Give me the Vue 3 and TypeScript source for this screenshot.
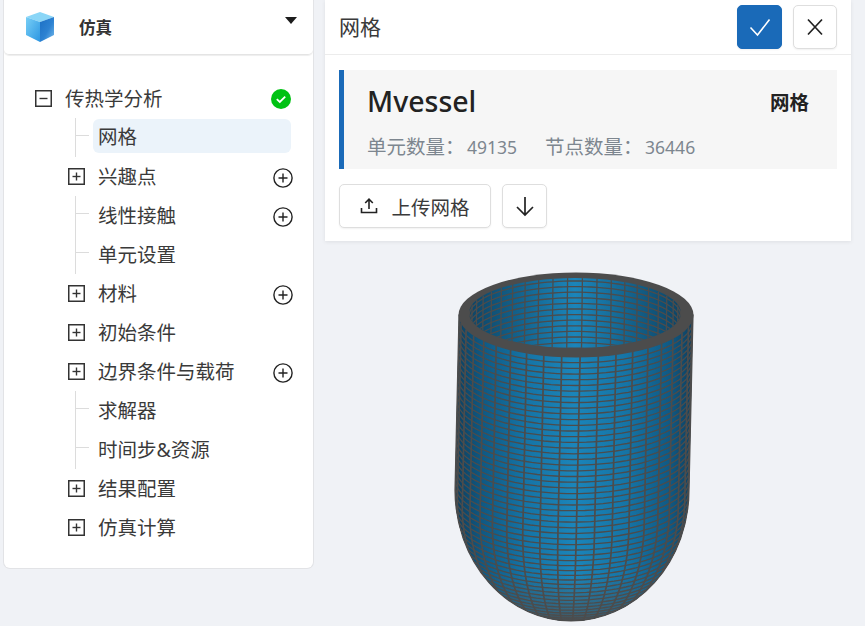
<script setup lang="ts">
interface TreeRow {
  label: string;
  kind: "root" | "branch" | "leaf";
  active?: boolean;
  add?: boolean;
  done?: boolean;
}

const rows: TreeRow[] = [
  { label: "传热学分析", kind: "root", done: true },
  { label: "网格", kind: "leaf", active: true },
  { label: "兴趣点", kind: "branch", add: true },
  { label: "线性接触", kind: "leaf", add: true },
  { label: "单元设置", kind: "leaf" },
  { label: "材料", kind: "branch", add: true },
  { label: "初始条件", kind: "branch" },
  { label: "边界条件与载荷", kind: "branch", add: true },
  { label: "求解器", kind: "leaf" },
  { label: "时间步&资源", kind: "leaf" },
  { label: "结果配置", kind: "branch" },
  { label: "仿真计算", kind: "branch" },
];

// vessel mesh, projected with a slight downward view
const R = 117;
const CX = 576;
const CY = 315;
const K = 0.36;
const S = 0.933;
const LEAN = 0.02;
const LEN = 188;
const BOTTOM = 1.2; // the dome is a little deeper than a true hemisphere
const rad = (d: number) => (d * Math.PI) / 180;

function project(x: number, toViewer: number, z: number) {
  return `${(CX + x - LEAN * z).toFixed(1)},${(CY + S * z + K * toViewer).toFixed(1)}`;
}

function wallPoint(deg: number, z: number) {
  if (z <= LEN) return project(R * Math.sin(rad(deg)), R * Math.cos(rad(deg)), z);
  const phi = (z - LEN) / (R * BOTTOM);
  const r = R * Math.cos(phi);
  return project(r * Math.sin(rad(deg)), r * Math.cos(rad(deg)), LEN + R * BOTTOM * Math.sin(phi));
}

const ringLines: string[] = [];
for (let z = 6; z < LEN + R * BOTTOM * 1.5; z += 6.1) {
  const pts: string[] = [];
  for (let d = -90; d <= 90; d += 3) pts.push(wallPoint(d, z));
  ringLines.push(pts.join(" "));
}

const ribLines: string[] = [];
for (let d = -88; d <= 90; d += 9) {
  const pts: string[] = [];
  for (let z = 0; z < LEN + R * BOTTOM * 1.5; z += 5) pts.push(wallPoint(d, z));
  ribLines.push(pts.join(" "));
}

const innerLines: string[] = [];
const IX = 575;
const IY = 313;
const IR = 106;
const IK = 35;
for (let i = 0; i < 14; i++) {
  const pts: string[] = [];
  for (let d = -90; d <= 90; d += 3) {
    pts.push(`${(IX + IR * Math.sin(rad(d))).toFixed(1)},${(IY + 5.6 * i + 3 - IK * Math.cos(rad(d))).toFixed(1)}`);
  }
  innerLines.push(pts.join(" "));
}
for (let d = -84; d <= 90; d += 8) {
  const x = IX + IR * Math.sin(rad(d));
  const y = IY - IK * Math.cos(rad(d));
  innerLines.push(`${x.toFixed(1)},${y.toFixed(1)} ${(x - 1).toFixed(1)},${(y + 80).toFixed(1)}`);
}

const bodyPath = "M459,315 L455,490 A116,131 0 0 0 571,621 A118,131 0 0 0 689,490 L693,315 Z";
</script>

<template>
  <div class="page">
    <aside class="side">
      <header class="side-head">
        <svg class="logo" viewBox="0 0 28 30" width="28" height="30">
          <defs>
            <linearGradient id="cubeLeft" x1="0" y1="0" x2="1" y2="1">
              <stop offset="0" stop-color="#78cff6" />
              <stop offset="1" stop-color="#2c96e2" />
            </linearGradient>
            <linearGradient id="cubeRight" x1="0" y1="0" x2="1" y2="1">
              <stop offset="0" stop-color="#1b6fc4" />
              <stop offset="0.55" stop-color="#2d82d2" />
              <stop offset="1" stop-color="#79bdec" />
            </linearGradient>
          </defs>
          <path d="M14 0 L28 5 L14 10 L0 5 Z" fill="#8ad6f7" />
          <path d="M0 5 L14 10 L14 30 L0 23 Z" fill="url(#cubeLeft)" />
          <path d="M28 5 L14 10 L14 30 L28 23 Z" fill="url(#cubeRight)" />
        </svg>
        <span class="side-title">仿真</span>
        <span class="caret"></span>
      </header>

      <div class="tree">
        <div
          v-for="row in rows"
          :key="row.label"
          class="tree-row"
          :class="['tree-row--' + row.kind, { 'tree-row--active': row.active }]"
        >
          <span v-if="row.kind === 'leaf'" class="guide"></span>
          <svg v-else class="toggle" viewBox="0 0 17 17" width="17" height="17">
            <rect x="0.75" y="0.75" width="15.5" height="15.5" fill="#fff" stroke="#333" stroke-width="1.5" />
            <path d="M4.5 8.5 H12.5" stroke="#333" stroke-width="1.4" />
            <path v-if="row.kind === 'branch'" d="M8.5 4.5 V12.5" stroke="#333" stroke-width="1.4" />
          </svg>
          <span class="tree-label">{{ row.label }}</span>
          <svg v-if="row.done" class="row-icon row-icon--done" viewBox="0 0 20 20" width="20" height="20">
            <circle cx="10" cy="10" r="10" fill="#00c213" />
            <path d="M5.8 10.2 L8.8 13 L14.2 7.6" fill="none" stroke="#fff" stroke-width="1.8" />
          </svg>
          <svg v-if="row.add" class="row-icon" viewBox="0 0 20 20" width="20" height="20">
            <circle cx="10" cy="10" r="9.1" fill="none" stroke="#222" stroke-width="1.4" />
            <path d="M5.5 10 H14.5 M10 5.5 V14.5" stroke="#222" stroke-width="1.4" />
          </svg>
        </div>
      </div>
    </aside>

    <main class="main">
      <section class="panel">
        <header class="panel-head">
          <span class="panel-title">网格</span>
          <button type="button" class="btn btn--icon btn--primary">
            <svg viewBox="0 0 24 24" width="24" height="24">
              <path d="M2.5 12.5 L9.5 20 L21.5 4.5" fill="none" stroke="#fff" stroke-width="1.6" />
            </svg>
          </button>
          <button type="button" class="btn btn--icon btn--close">
            <svg viewBox="0 0 20 20" width="20" height="20">
              <path d="M3 2.5 L17 17.5 M17 2.5 L3 17.5" fill="none" stroke="#222" stroke-width="1.7" />
            </svg>
          </button>
        </header>

        <div class="panel-body">
          <div class="mesh-card">
            <div class="mesh-top">
              <span class="mesh-name">Mvessel</span>
              <span class="mesh-tag">网格</span>
            </div>
            <div class="mesh-stats">
              <span>单元数量：<span class="num">49135</span></span>
              <span>节点数量：<span class="num">36446</span></span>
            </div>
          </div>

          <div class="actions">
            <button type="button" class="btn btn--upload">
              <svg viewBox="0 0 18 18" width="18" height="18">
                <path d="M9 12 V2.5 M5.2 6 L9 2.2 L12.8 6 M1.5 11 V15.5 H16.5 V11" fill="none" stroke="#222" stroke-width="1.6" />
              </svg>
              <span>上传网格</span>
            </button>
            <button type="button" class="btn btn--icon">
              <svg viewBox="0 0 22 22" width="22" height="22">
                <path d="M11 2 V20 M3 12 L11 20 L19 12" fill="none" stroke="#222" stroke-width="1.7" />
              </svg>
            </button>
          </div>
        </div>
      </section>

      <svg class="viewer" viewBox="325 241 540 385" width="540" height="385">
        <defs>
          <linearGradient id="wallFill" gradientUnits="userSpaceOnUse" x1="455" y1="0" x2="693" y2="0">
            <stop offset="0" stop-color="#0e3f5e" />
            <stop offset="0.12" stop-color="#0f5a85" />
            <stop offset="0.3" stop-color="#1574a6" />
            <stop offset="0.5" stop-color="#1b85ba" />
            <stop offset="0.72" stop-color="#1574a6" />
            <stop offset="0.9" stop-color="#0f5a85" />
            <stop offset="1" stop-color="#0e3f5e" />
          </linearGradient>
          <linearGradient id="innerFill" gradientUnits="userSpaceOnUse" x1="469" y1="0" x2="681" y2="0">
            <stop offset="0" stop-color="#0d4465" />
            <stop offset="0.25" stop-color="#13648f" />
            <stop offset="0.5" stop-color="#1b85ba" />
            <stop offset="0.75" stop-color="#13648f" />
            <stop offset="1" stop-color="#0d4465" />
          </linearGradient>
          <linearGradient id="bottomShade" gradientUnits="userSpaceOnUse" x1="0" y1="575" x2="0" y2="621">
            <stop offset="0" stop-color="#4c4c4c" stop-opacity="0" />
            <stop offset="0.8" stop-color="#4c4c4c" stop-opacity="0.55" />
            <stop offset="1" stop-color="#4c4c4c" />
          </linearGradient>
          <clipPath id="bodyClip"><path :d="bodyPath" /></clipPath>
          <clipPath id="innerClip"><ellipse :cx="IX" :cy="IY" :rx="IR" :ry="IK" /></clipPath>
        </defs>

        <path :d="bodyPath" fill="url(#wallFill)" />
        <g clip-path="url(#bodyClip)" fill="none" stroke="#4c4c4c">
          <polyline v-for="(pts, i) in ringLines" :key="i" :points="pts" stroke-width="1.3" />
          <polyline v-for="(pts, i) in ribLines" :key="i" :points="pts" stroke-width="1.7" />
        </g>
        <path :d="bodyPath" fill="url(#bottomShade)" />
        <path :d="bodyPath" fill="none" stroke="#4c4c4c" stroke-width="1.2" />

        <ellipse :cx="CX" :cy="CY" rx="117.5" ry="42.5" fill="#4c4c4c" />
        <ellipse :cx="IX" :cy="IY" :rx="IR" :ry="IK" fill="url(#innerFill)" />
        <g clip-path="url(#innerClip)" fill="none" stroke="#4c4c4c" stroke-width="1.3">
          <polyline v-for="(pts, i) in innerLines" :key="i" :points="pts" />
        </g>
      </svg>
    </main>
  </div>
</template>

<style scoped>
.page {
  display: flex;
  align-items: flex-start;
  gap: 12px;
  box-sizing: border-box;
  width: 865px;
  height: 626px;
  padding-left: 4px;
  overflow: hidden;
  color: #333;
  background: #f0f2f6;
  font-family: "Noto Sans", "Noto Sans CJK SC", sans-serif;
}

.side {
  flex: none;
  width: 309px;
  height: 568px;
  display: flex;
  flex-direction: column;
  border-radius: 0 0 6px 6px;
  background: #fff;
  box-shadow: 0 0 0 1px #e2e3e6;
}

.side-head {
  flex: none;
  height: 54px;
  display: flex;
  align-items: center;
  padding: 0 16px 0 22px;
  border-bottom: 1px solid #e4e4e4;
  border-radius: 0 0 5px 5px;
  box-shadow: 0 1px 1px #eee;
}

.logo {
  flex: none;
}

.side-title {
  margin-left: 25px;
  font-size: 16.5px;
  font-weight: 700;
  color: #333;
}

.caret {
  margin: -13px 0 0 auto;
  border-style: solid;
  border-width: 7px 6px 0;
  border-color: #1c1c1c transparent transparent;
}

.tree {
  padding: 23px 22px 0 31px;
}

.tree-row {
  position: relative;
  height: 39px;
  display: flex;
  align-items: center;
  font-size: 19.5px;
  color: #3a3a3a;
}

.tree-row--branch {
  padding-left: 33px;
}

.tree-row--leaf {
  padding-left: 63px;
}

.tree-row--active::before {
  content: "";
  position: absolute;
  left: 58px;
  right: 0;
  top: 2px;
  height: 34px;
  border-radius: 6px;
  background: #ebf3fa;
}

.tree-row--active .tree-label {
  margin-top: -2px;
}

.tree-row--leaf .tree-label {
  position: relative;
}

.toggle {
  flex: none;
  margin-top: 2px;
  margin-right: 13px;
}

.guide {
  position: absolute;
  left: 40px;
  top: 1px;
  width: 13px;
  height: 39px;
  border-left: 1px solid #dcdcdc;
}

.guide::after {
  content: "";
  position: absolute;
  left: 0;
  top: 17px;
  width: 13px;
  border-top: 1px solid #dcdcdc;
}

.row-icon {
  position: relative;
  flex: none;
  margin-top: 5px;
  margin-left: auto;
  margin-right: -2px;
}

.row-icon--done {
  margin-top: 2px;
  margin-right: 0;
}

.main {
  flex: none;
  width: 540px;
  display: flex;
  flex-direction: column;
}

.panel {
  width: 526px;
  height: 241px;
  background: #fff;
  box-shadow: 0 1px 4px rgba(0, 0, 0, 0.08);
}

.panel-head {
  height: 54px;
  display: flex;
  align-items: center;
  gap: 11px;
  padding: 0 14px;
  border-bottom: 1px solid #ececec;
}

.panel-title {
  margin-top: -3px;
  margin-right: auto;
  font-size: 21px;
  color: #3a3a3a;
}

.btn {
  display: inline-flex;
  align-items: center;
  justify-content: center;
  padding: 0;
  border: 1px solid #dedede;
  border-radius: 5px;
  background: #fff;
  box-shadow: 0 1px 2px rgba(0, 0, 0, 0.06);
  font-family: inherit;
}

.btn--icon {
  width: 45px;
  height: 44px;
}

.btn--close {
  width: 44px;
}

.btn--primary {
  border-color: #1a6ab8;
  background: #1a6ab8;
}

.panel-body {
  padding: 15px 14px 0;
}

.mesh-card {
  height: 99px;
  box-sizing: border-box;
  padding: 11px 28px 0 23px;
  border-left: 5px solid #1a6ab8;
  background: #f6f6f6;
}

.mesh-top {
  display: flex;
  align-items: center;
  justify-content: space-between;
  height: 40px;
}

.mesh-name {
  font-size: 28.5px;
  font-weight: 500;
  color: #222;
}

.mesh-tag {
  font-size: 19.5px;
  font-weight: 700;
  color: #222;
}

.mesh-stats {
  display: flex;
  gap: 28px;
  margin-top: 11px;
  font-size: 19.5px;
  line-height: 30px;
  color: #7d868f;
}

.num {
  margin-left: 2.5px;
  font-size: 17.5px;
}

.actions {
  display: flex;
  gap: 11px;
  margin-top: 15px;
}

.btn--upload {
  width: 152px;
  height: 44px;
  gap: 13px;
  font-size: 19.5px;
  color: #3a3a3a;
}

.viewer {
  display: block;
  flex: none;
}
</style>

<style>
html,
body {
  margin: 0;
  background: #f0f2f6;
}
</style>
